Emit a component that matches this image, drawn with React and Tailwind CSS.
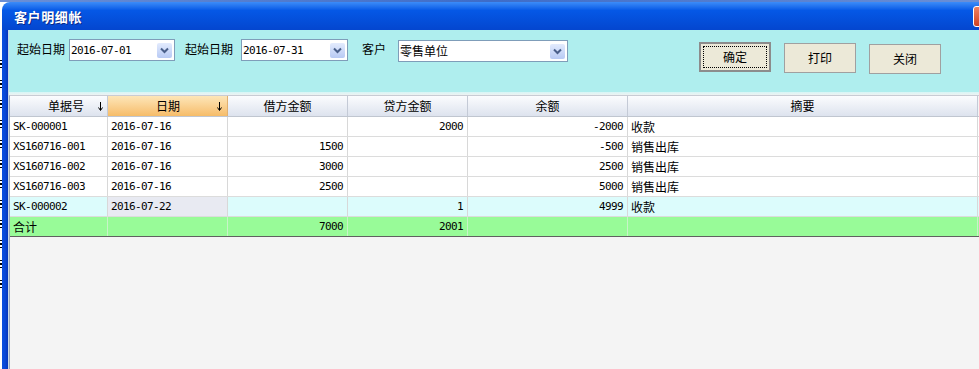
import React from "react";

const CJK = "font-['Noto_Sans_CJK_SC',sans-serif]";

const rows = [
  ["SK-000001", "2016-07-16", "", "2000", "-2000", "收款"],
  ["XS160716-001", "2016-07-16", "1500", "", "-500", "销售出库"],
  ["XS160716-002", "2016-07-16", "3000", "", "2500", "销售出库"],
  ["XS160716-003", "2016-07-16", "2500", "", "5000", "销售出库"],
  ["SK-000002", "2016-07-22", "", "1", "4999", "收款"],
];
const total = ["合计", "", "7000", "2001", "", ""];
const rightCols = [false, false, true, true, true, false];

function Txt({ s }) {
  if (!s) return null;
  const ascii = /^[\x00-\x7F]+$/.test(s);
  return ascii ? (
    <span className="font-['DejaVu_Sans_Mono',monospace] text-[11px] tracking-[-0.62px] leading-none">{s}</span>
  ) : (
    <span className={`${CJK} text-[12px] leading-none`}>{s}</span>
  );
}

function Chevron() {
  return (
    <div className="w-[15px] h-[15px] bg-gradient-to-b from-[#e3ebfd] to-[#b8caf4] rounded-[2px] flex items-center justify-center">
      <svg width="9" height="7" viewBox="0 0 9 7">
        <path d="M1 1.5 L4.5 5 L8 1.5" fill="none" stroke="#4a5f8a" strokeWidth="2" />
      </svg>
    </div>
  );
}

function Combo({ value, w }) {
  return (
    <div className={`${w} h-[22px] bg-white border border-[#7f9db9] flex items-center justify-between pl-[1px] pr-[2px]`}>
      <Txt s={value} />
      <Chevron />
    </div>
  );
}

function ArrowDown() {
  return (
    <svg width="5" height="9" viewBox="0 0 5 9">
      <path d="M2.5 0 V8" stroke="#000" strokeWidth="1" />
      <path d="M0.5 5.5 L2.5 8.5 L4.5 5.5" fill="none" stroke="#000" strokeWidth="1" />
    </svg>
  );
}

export default function App() {
  return (
    <div className="w-[979px] h-[369px] overflow-hidden bg-white flex flex-col">
      <div className="h-[2px] bg-gradient-to-r from-[#6b8fd6] via-[#3e6cc8] to-[#6b8fd6] shrink-0" />
      <div className="flex flex-1 min-h-0">
        <div className="w-[2px] flex flex-col bg-white pt-[58px] gap-[12px]">
          {Array.from({ length: 12 }).map((_, i) => (
            <div key={i} className="w-[2px] h-[8px] flex flex-col justify-between">
              <div className="h-[1px] bg-black" />
              <div className="h-[2px] bg-black" />
              <div className="h-[1px] bg-black" />
            </div>
          ))}
        </div>
        <div className="flex-1 flex flex-col min-w-0">
          {/* title bar */}
          <div className="h-[28px] shrink-0 rounded-tl-[8px] bg-gradient-to-b from-[#3c8cf8] via-[#0558e6] via-30% to-[#0446cf] flex items-center justify-between pl-[12px]">
            <span className={`${CJK} text-white text-[13px] font-bold tracking-[0.6px] leading-none [text-shadow:1px_1px_0_#0a2a8a]`}>客户明细帐</span>
            <div className="w-[21px] h-[21px] mr-[-15px] rounded-[3px] border border-white bg-gradient-to-b from-[#f08060] to-[#d04020]" />
          </div>
          <div className="flex flex-1 min-h-0">
            <div className="w-[6px] bg-gradient-to-r from-[#0a4fe0] via-[#0848d8] to-[#0836b8] shrink-0" />
            <div className="w-[1px] bg-[#c8d8e8] shrink-0" />
            <div className="flex-1 flex flex-col min-w-0">
              {/* cyan panel */}
              <div className="h-[62px] shrink-0 bg-[#afeeee] flex items-start pt-[9px] pl-[8px]">
                <span className={`${CJK} text-[12px] leading-[20px] w-[48px] text-black`}>起始日期</span>
                <div className="ml-[4px]"><Combo value="2016-07-01" w="w-[106px]" /></div>
                <span className={`${CJK} text-[12px] leading-[20px] w-[48px] ml-[10px] text-black`}>起始日期</span>
                <div className="ml-[8px]"><Combo value="2016-07-31" w="w-[107px]" /></div>
                <span className={`${CJK} text-[12px] leading-[20px] w-[24px] ml-[14px] text-black`}>客户</span>
                <div className="ml-[12px] mt-[1px]"><Combo value="零售单位" w="w-[170px]" /></div>
                <div className="ml-[131px] mt-[3px] w-[72px] h-[30px] bg-[#ece9d8] border-2 border-[#8c8c8c] p-[2px]">
                  <div className={`w-full h-full border border-dotted border-black flex items-center justify-center ${CJK} text-[12px] text-black`}>确定</div>
                </div>
                <div className={`ml-[13px] mt-[4px] w-[72px] h-[30px] bg-[#ece9d8] border border-[#a0a0a0] flex items-center justify-center ${CJK} text-[12px] text-black`}>打印</div>
                <div className={`ml-[13px] mt-[5px] w-[72px] h-[30px] bg-[#ece9d8] border border-[#a0a0a0] flex items-center justify-center ${CJK} text-[12px] text-black`}>关闭</div>
              </div>
              <div className="h-[3px] shrink-0 bg-gradient-to-b from-[#d6f6f6] to-[#eef2f2]" />
              {/* grid */}
              <div className="flex-1 bg-[#f4f4f4] border-l border-[#9aa6b8] border-t border-t-[#c8ccd4] flex flex-col">
                <div className="grid grid-cols-[98px_120px_120px_120px_160px_350px] h-[21px] border-b border-[#c0c6d0]">
                  <div className="flex items-center bg-gradient-to-b from-[#fbfcfe] to-[#dde3ee] border-r border-[#c4cad6] pl-[38px] pr-[4px]">
                    <span className={`${CJK} text-[12px] text-black flex-1`}>单据号</span>
                    <ArrowDown />
                  </div>
                  <div className="flex items-center bg-gradient-to-b from-[#fde6b8] to-[#f6bc68] border-r border-[#e0b070] pl-[48px] pr-[5px]">
                    <span className={`${CJK} text-[12px] text-black flex-1`}>日期</span>
                    <ArrowDown />
                  </div>
                  {["借方金额", "贷方金额", "余额", "摘要"].map((h) => (
                    <div key={h} className={`flex items-center justify-center bg-gradient-to-b from-[#fbfcfe] to-[#dde3ee] border-r border-[#c4cad6] ${CJK} text-[12px] text-black`}>{h}</div>
                  ))}
                </div>
                {rows.map((r, i) => {
                  const sel = i === 4;
                  return (
                    <div key={i} className={`grid grid-cols-[98px_120px_120px_120px_160px_350px] h-[20px] border-b border-[#dcdcdc] ${sel ? "bg-[#dcfcfc]" : "bg-white"}`}>
                      {r.map((c, j) => (
                        <div key={j} className={`flex items-center border-r border-[#d8d8d8] ${rightCols[j] ? "justify-end pr-[4px]" : "justify-start pl-[3px]"} ${sel && j === 1 ? "bg-[#e8eaf2]" : ""} text-black`}>
                          <Txt s={c} />
                        </div>
                      ))}
                    </div>
                  );
                })}
                <div className="grid grid-cols-[98px_120px_120px_120px_160px_350px] h-[20px] bg-[#98fb98] border-b border-[#606060]">
                  {total.map((c, j) => (
                    <div key={j} className={`flex items-center border-r border-[#c8f4c8] ${rightCols[j] ? "justify-end pr-[4px]" : "justify-start pl-[3px]"} text-black`}>
                      <Txt s={c} />
                    </div>
                  ))}
                </div>
              </div>
            </div>
          </div>
        </div>
      </div>
    </div>
  );
}
